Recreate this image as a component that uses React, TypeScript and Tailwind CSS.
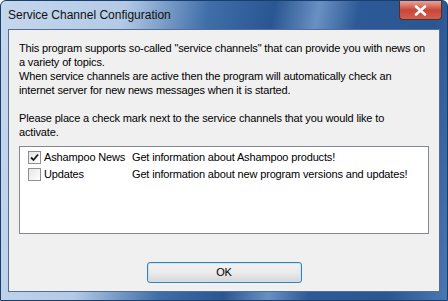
import React from 'react'

const channels = [
  { name: 'Ashampoo News', info: 'Get information about Ashampoo products!', checked: true },
  { name: 'Updates', info: 'Get information about new program versions and updates!', checked: false },
]

function CheckBox({ checked }: { checked: boolean }) {
  return (
    <div className="w-[13px] h-[13px] border border-[#8f8f8f] bg-gradient-to-br from-[#e6e6e6] to-white flex items-center justify-center shrink-0">
      {checked && (
        <svg width="9" height="9" viewBox="0 0 9 9">
          <path d="M1 4.5 L3.5 7 L8 1.5" fill="none" stroke="#1b1b1b" strokeWidth="1.8" />
        </svg>
      )}
    </div>
  )
}

export default function App() {
  return (
    <div
      className="w-[448px] h-[301px] flex flex-col overflow-hidden border border-[#183e70] rounded-t-[6px] bg-[linear-gradient(100deg,#c5d7ec_0%,#b3cae6_25%,#3f6ea9_42%,#2a5692_55%,#6990c3_64%,#2d5a96_72%,#2a5692_88%,#4a78b2_100%)]"
      style={{ fontFamily: '"Liberation Sans", Arial, sans-serif' }}
    >
      {/* Title bar */}
      <div className="h-[28px] flex items-start justify-between shrink-0">
        <div className="pl-[7px] pt-[7px] text-[12px] text-[#111] leading-[14px]">Service Channel Configuration</div>
        <div className="mr-[5px] w-[43px] h-[19px] rounded-b-[4px] border border-[#5b2a2a] border-t-0 bg-gradient-to-b from-[#e8a394] via-[#c9463a] to-[#d0604a] flex items-center justify-center">
          <svg width="13" height="11" viewBox="0 0 13 11">
            <path d="M2 1.5 L11 9.5 M11 1.5 L2 9.5" stroke="#ffffff" strokeWidth="2.6" strokeLinecap="round" />
          </svg>
        </div>
      </div>

      {/* Client area */}
      <div className="flex-1 mx-[7px] mb-[8px] border border-[#546e92] bg-[#f0f0f0] flex flex-col px-[10px] pt-[11px] text-[11px] text-black tracking-[-0.15px]">
        <p className="leading-[14px] whitespace-nowrap">
          This program supports so-called "service channels" that can provide you with news on
          <br />
          a variety of topics.
          <br />
          When service channels are active then the program will automatically check an
          <br />
          internet server for new news messages when it is started.
          <br />
          <br />
          Please place a check mark next to the service channels that you would like to
          <br />
          activate.
        </p>

        <div className="mt-[7px] h-[88px] border border-[#828790] bg-white pt-[2px] pl-[8px]">
          {channels.map((c) => (
            <div key={c.name} className="h-[17px] flex items-center">
              <CheckBox checked={c.checked} />
              <span className="ml-[3px] w-[88px]">{c.name}</span>
              <span>{c.info}</span>
            </div>
          ))}
        </div>

        <div className="flex justify-center mt-[28px]">
          <button className="w-[155px] h-[21px] rounded-[3px] border border-[#3c7fb1] bg-gradient-to-b from-[#f2f2f2] via-[#ebebeb] to-[#d6d6d6] shadow-[inset_0_0_0_1px_#c4e5f6] text-[11px] text-black">
            OK
          </button>
        </div>
      </div>
    </div>
  )
}
